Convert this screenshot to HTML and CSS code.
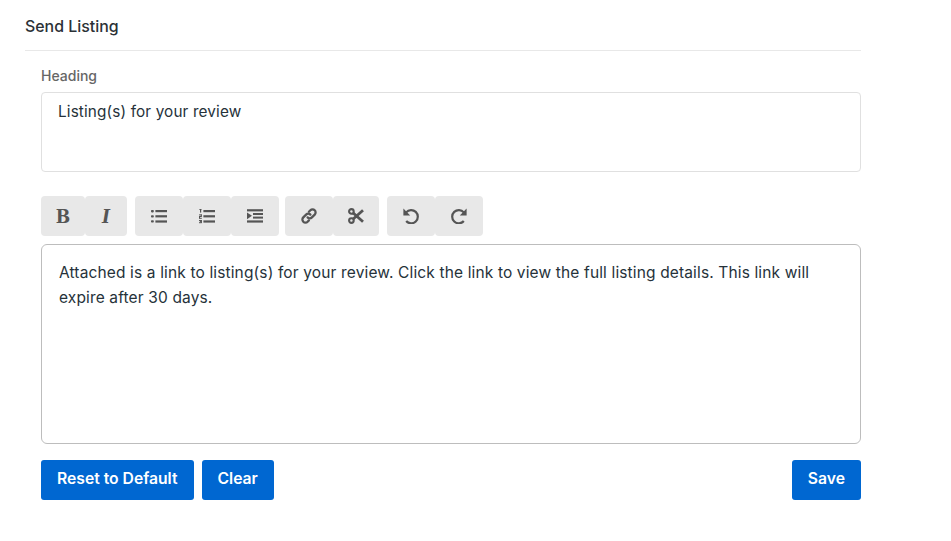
FILE: index.html
```html
<!DOCTYPE html>
<html lang="en">
<head>
<meta charset="utf-8">
<title>Send Listing</title>
<link rel="stylesheet" href="styles.css">
</head>
<body>
<div class="panel">
  <h2 class="title">Send Listing</h2>
  <div class="form">
    <label class="label">Heading</label>
    <div class="input">Listing(s) for your review</div>
    <div class="toolbar">
      <div class="group">
        <span class="tool glyph bold">B</span>
        <span class="tool glyph italic">I</span>
      </div>
      <div class="group">
        <span class="tool"><svg class="icon" viewBox="0 0 16 16"><g fill="#555"><rect x="0" y="2" width="2.8" height="2.4" rx=".8"/><rect x="0" y="7.2" width="2.8" height="2.4" rx=".8"/><rect x="0" y="12.2" width="2.8" height="2.4" rx=".8"/><rect x="4.4" y="2" width="11.6" height="2.2"/><rect x="4.4" y="7.2" width="11.6" height="2.2"/><rect x="4.4" y="12.4" width="11.6" height="2.2"/></g></svg></span>
        <span class="tool"><svg class="icon" viewBox="0 0 16 16"><g fill="#555"><rect x="0.4" y="1" width="2" height="1"/><rect x="1" y="1" width="1.2" height="3.6"/><rect x="0" y="6.4" width="2.8" height="1"/><rect x="1.8" y="6.4" width="1" height="2"/><rect x="0" y="8" width="2.8" height="1"/><rect x="0" y="8.6" width="1" height="1.6"/><rect x="0" y="9.8" width="2.8" height="1"/><rect x="0" y="12" width="2.8" height="1"/><rect x="0.8" y="13.1" width="2" height="1"/><rect x="0" y="14.2" width="2.8" height="1"/><rect x="1.8" y="12" width="1" height="3"/><rect x="4.4" y="2" width="11.6" height="2.2"/><rect x="4.4" y="7.2" width="11.6" height="2.2"/><rect x="4.4" y="12.4" width="11.6" height="2.2"/></g></svg></span>
        <span class="tool"><svg class="icon" viewBox="0 0 16 16"><g fill="#555"><rect x="0" y="1.2" width="16" height="2.2"/><rect x="6" y="5" width="10" height="2"/><rect x="6" y="8.6" width="10" height="2"/><rect x="0" y="12.4" width="16" height="2.2"/><path d="M0 4.4 5 7.8 0 11.2z"/></g></svg></span>
      </div>
      <div class="group">
        <span class="tool"><svg class="icon" viewBox="0 0 16 16"><g fill="none" stroke="#555" stroke-width="2.3" stroke-linecap="round"><path d="M6.6 9.4a3 3 0 0 0 4.3 0l2.8-2.8a3 3 0 0 0-4.3-4.3L7.9 3.8"/><path d="M9.4 6.6a3 3 0 0 0-4.3 0L2.3 9.4a3 3 0 0 0 4.3 4.3l1.3-1.3"/></g></svg></span>
        <span class="tool"><svg class="icon" viewBox="0 0 16 16"><g fill="none" stroke="#555"><circle cx="3.4" cy="3.4" r="2.3" stroke-width="2.1"/><circle cx="3.4" cy="12.6" r="2.3" stroke-width="2.1"/><path d="M5.2 5 15 13.8M5.2 11 15 2.2" stroke-width="2.8"/></g></svg></span>
      </div>
      <div class="group">
        <span class="tool"><svg class="icon" viewBox="0 0 16 16"><path d="M3.2 4.4A6.6 6.6 0 1 1 3.2 13" fill="none" stroke="#555" stroke-width="2.2"/><path d="M0.4 0.6 7.2 7.4H0.4z" fill="#555"/></svg></span>
        <span class="tool"><svg class="icon" viewBox="0 0 16 16"><path d="M12.8 4.4A6.6 6.6 0 1 0 12.8 13" fill="none" stroke="#555" stroke-width="2.2"/><path d="M15.6 0.6 8.8 7.4H15.6z" fill="#555"/></svg></span>
      </div>
    </div>
    <div class="editor">Attached is a link to listing(s) for your review. Click the link to view the full listing details. This link will expire after 30 days.</div>
    <div class="actions">
      <button class="btn" type="button">Reset to Default</button>
      <button class="btn" type="button">Clear</button>
      <button class="btn save" type="button">Save</button>
    </div>
  </div>
</div>
</body>
</html>
```
FILE: styles.css
```css
* { box-sizing: border-box; }
html, body { margin: 0; padding: 0; background: #fff; }
body { width: 951px; height: 541px; overflow: hidden; font-family: Inter, "Liberation Sans", sans-serif; color: #333; }
.panel { width: 836px; margin-left: 25px; }
.title { margin: 0; height: 51px; padding-top: 17px; font-size: 15.9px; line-height: 20px; font-weight: 550; color: #2b3136; border-bottom: 1px solid #e8e8e8; }
.form { padding-left: 16px; padding-top: 16px; }
.label { display: block; height: 25px; font-size: 14px; line-height: 18px; font-weight: 500; color: #666; }
.input { height: 80px; padding: 9px 16px; font-size: 15.3px; line-height: 20px; letter-spacing: .14px; color: #26323a; border: 1px solid #e0e0e0; border-radius: 4px; }
.toolbar { display: flex; margin-top: 24px; height: 40px; }
.group { display: flex; margin-right: 8px; }
.group:nth-child(2) { margin-right: 6px; }
.tool { display: flex; align-items: center; justify-content: center; width: 48px; height: 40px; background: #e8e8e8; border-radius: 4px; }
.group:first-child .tool:first-child { width: 44px; }
.group:first-child .tool:last-child { width: 42px; }
.group:nth-child(3) .tool:last-child { width: 46px; }
.icon { width: 16px; height: 16px; display: block; }
.glyph { font-family: "DejaVu Serif Condensed", "DejaVu Serif", serif; font-size: 19px; color: #555; }
.bold { font-weight: 700; }
.italic { font-style: italic; font-weight: 700; }
.editor { margin-top: 8px; height: 200px; padding: 15px 17px; font-size: 15.5px; line-height: 25px; letter-spacing: .14px; color: #26323a; border: 1px solid #bdbdbd; border-radius: 6px; }
.actions { display: flex; gap: 8px; margin-top: 16px; }
.btn { height: 40px; padding: 0 16px 3px; font-family: inherit; font-size: 15.7px; font-weight: 600; color: #fff; background: #0067d1; border: 0; border-radius: 3px; }
.save { margin-left: auto; }
```
